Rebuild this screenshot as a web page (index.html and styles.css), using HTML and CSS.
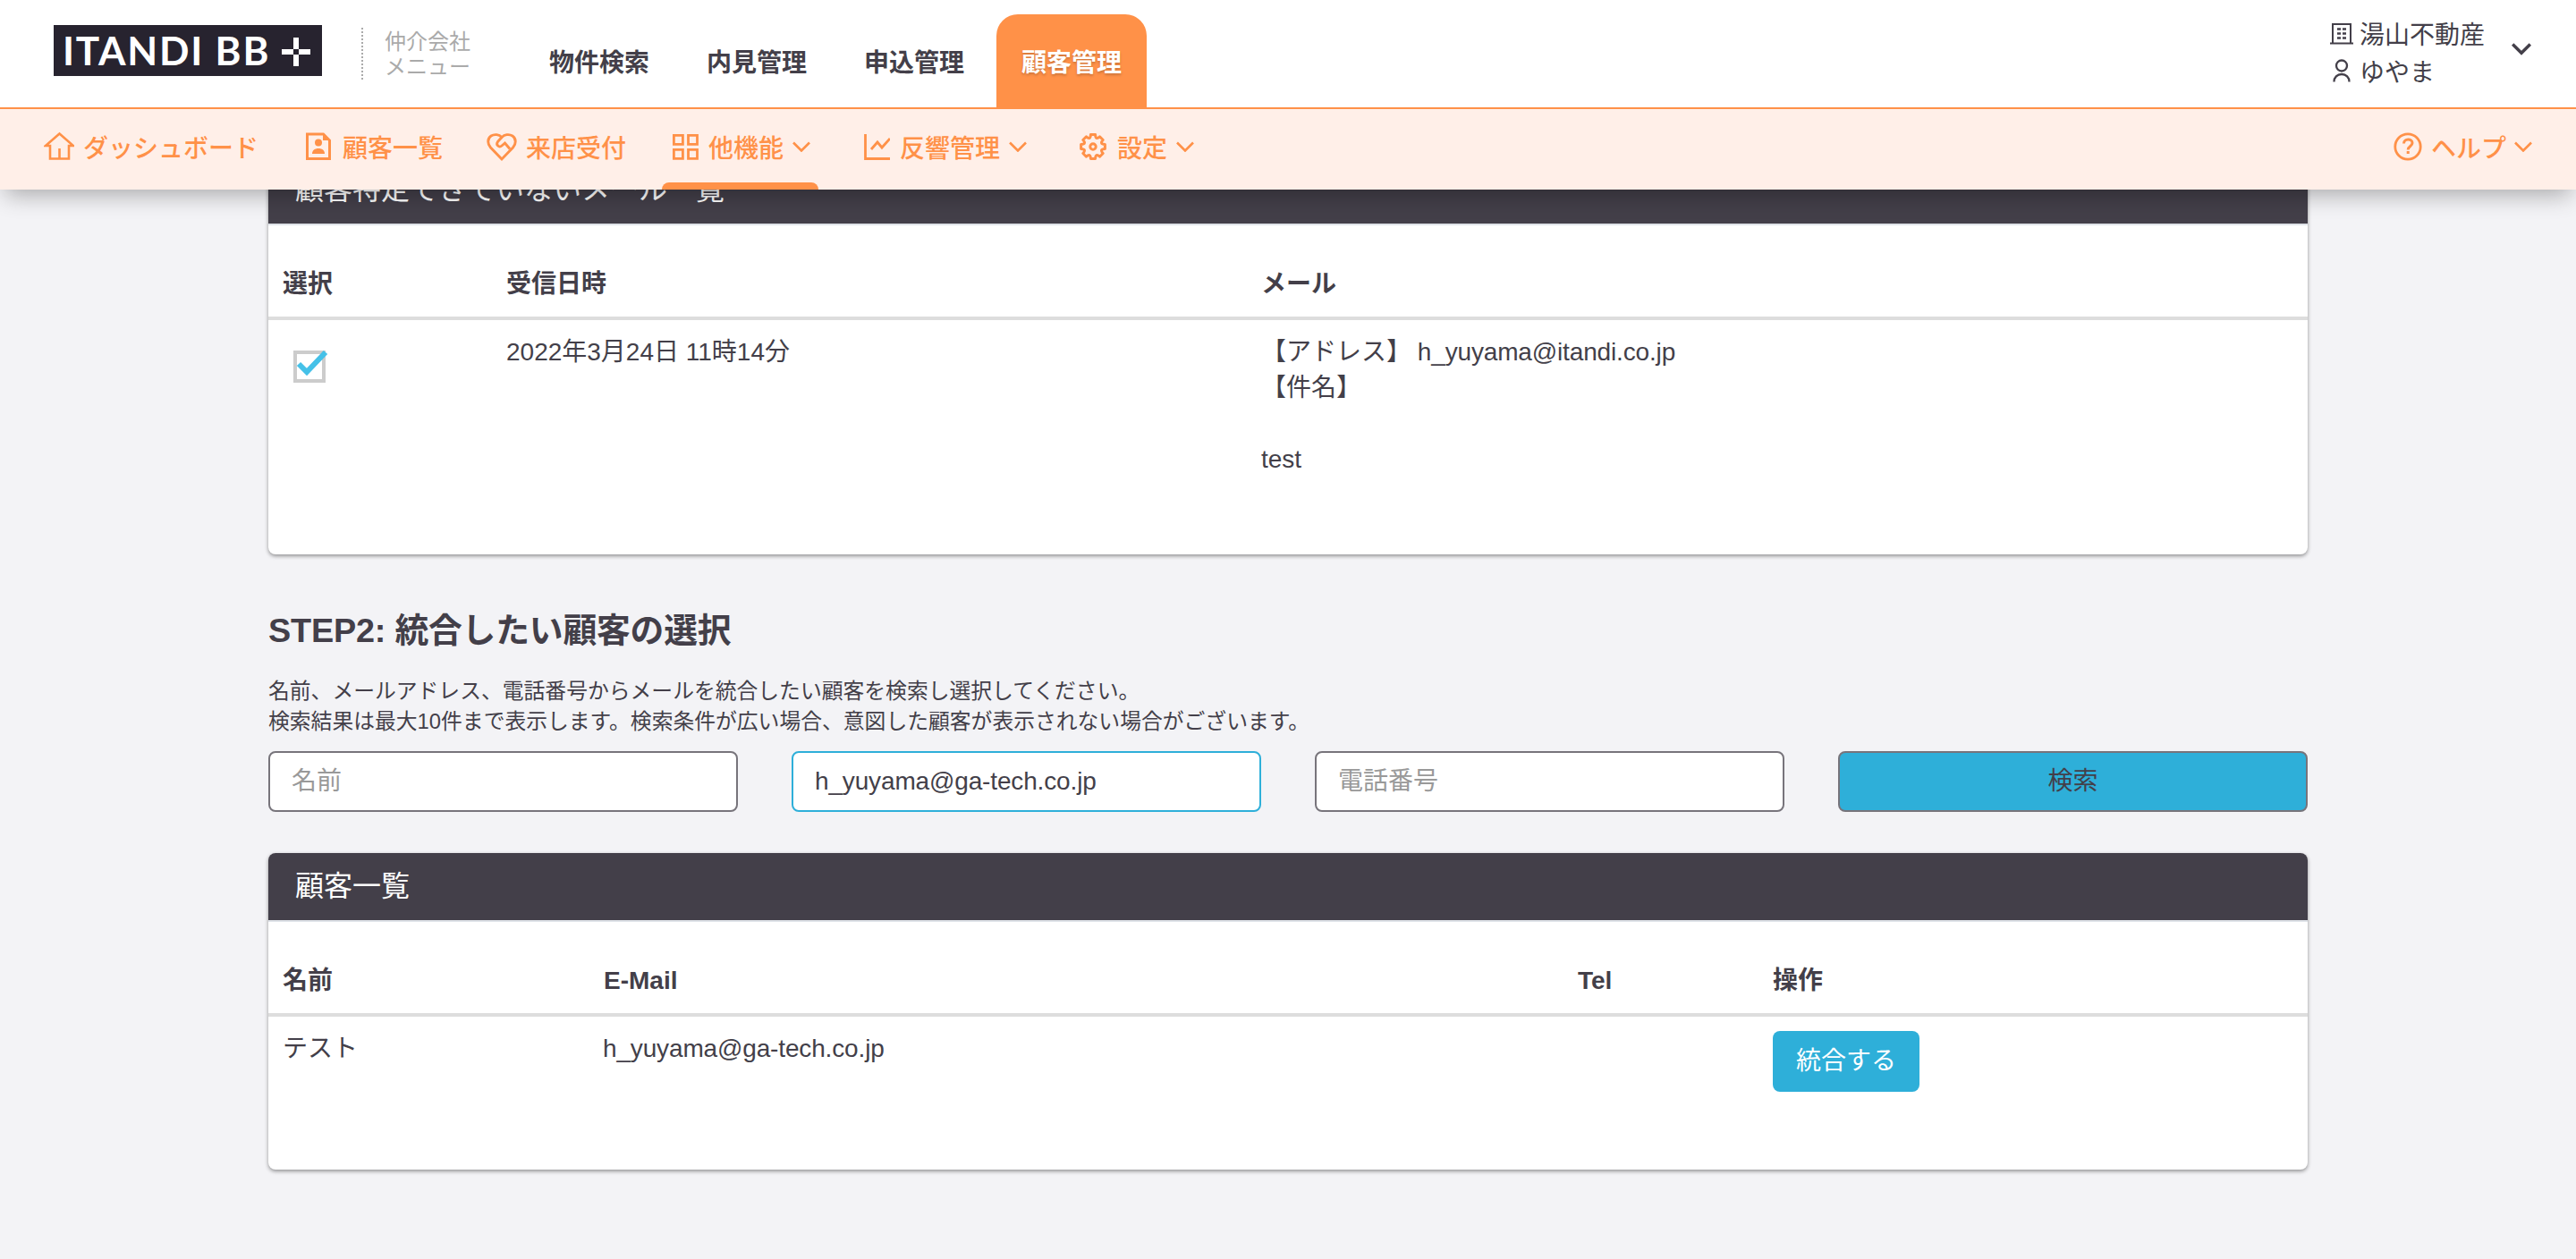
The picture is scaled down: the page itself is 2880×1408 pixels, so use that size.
FILE: index.html
```html
<!DOCTYPE html>
<html lang="ja">
	<head>
		<meta charset="UTF-8">
		<title>ITANDI BB +</title>
		<link rel="stylesheet" href="styles.css">
	</head>
	<body>
		<header class="header">
			<div class="top">
				<div class="logo">
					<span class="logo_text">ITANDI BB</span>
					<svg class="logo_plus" width="34" height="34" viewBox="0 0 34 34"><path d="M14 1h6v13h-6zM14 20h6v13h-6zM1 14h13v6H1zM20 14h13v6H20z" fill="#fff"/></svg>
				</div>
				<p class="menu_name">仲介会社<br>メニュー</p>
				<ul class="nav">
					<li><a href="#">物件検索</a></li>
					<li><a href="#">内見管理</a></li>
					<li><a href="#">申込管理</a></li>
					<li class="on"><a href="#">顧客管理</a></li>
				</ul>
				<div class="account">
					<div class="account_info">
						<p><svg width="26" height="26" viewBox="0 0 26 26"><path d="M3 24V3h20v21M0 24.500h26" fill="none" stroke="currentColor" stroke-width="2"/><path d="M8 8.500h4M14 8.500h4M8 13.500h4M14 13.500h4M8 18.500h4M14 18.500h4" stroke="currentColor" stroke-width="2.500"/></svg>湯山不動産</p>
						<p><svg width="26" height="26" viewBox="0 0 26 26"><circle cx="13" cy="7.500" r="6" fill="none" stroke="currentColor" stroke-width="2.300"/><path d="M4.500 25.500c0-5 3.500-8.500 8.500-8.500s8.500 3.500 8.500 8.500" fill="none" stroke="currentColor" stroke-width="2.300"/></svg>ゆやま</p>
					</div>
					<svg class="account_arrow" width="22" height="14" viewBox="0 0 22 14"><path d="M1.200 1.500l9.800 9.800 9.800-9.800" fill="none" stroke="currentColor" stroke-width="3.400"/></svg>
				</div>
			</div>
			<ul class="sub">
				<li class="s1"><svg width="34" height="34" viewBox="0 0 34 34"><path d="M2 16h5v14.500h21V16h5L17.500 2.500z M17.500 30.500V19" fill="none" stroke="currentColor" stroke-width="2.600"/></svg>ダッシュボード</li>
				<li class="s2"><svg width="28" height="34" viewBox="0 0 28 34"><path d="M1.500 3h18l7 7v20.500h-25z" fill="none" stroke="currentColor" stroke-width="3"/><path d="M19 2l8 8h-8z" fill="currentColor"/><circle cx="14" cy="12.500" r="4" fill="currentColor"/><path d="M7 25c0-4 3-6 7-6s7 2 7 6z" fill="currentColor"/></svg>顧客一覧</li>
				<li class="s3"><svg width="34" height="34" viewBox="0 0 34 34"><path d="M17 31L4.500 18C1 14 .500 8 5 5c4-2.500 9-1.500 12 1.500 3-3 8-4 12-1.500 4.500 3 4 9 .5 13z" fill="none" stroke="currentColor" stroke-width="2.900"/><path d="M17 6.500l-4.500 5c-2.500 3.500 1.500 7 4.500 4.500l3.500-3 5.500 6.500" fill="none" stroke="currentColor" stroke-width="2.900"/></svg>来店受付</li>
				<li class="s4 on"><svg width="29" height="34" viewBox="0 0 29 34"><path d="M1.400 4.400h10v10h-10zM17.500 4.400h10v10h-10zM1.400 20.400h10v10h-10zM17.500 20.400h10v10h-10z" fill="none" stroke="currentColor" stroke-width="2.800"/></svg>他機能<svg class="arrow" width="20" height="12" viewBox="0 0 20 12"><path d="M1 1.500l9 9 9-9" fill="none" stroke="currentColor" stroke-width="2.600"/></svg></li>
				<li class="s5"><svg width="29" height="34" viewBox="0 0 29 34"><path d="M1.500 3v27.500H29" fill="none" stroke="currentColor" stroke-width="2.800"/><path d="M8 20l7-8 5 6 9-10" fill="none" stroke="currentColor" stroke-width="2.800"/></svg>反響管理<svg class="arrow" width="20" height="12" viewBox="0 0 20 12"><path d="M1 1.500l9 9 9-9" fill="none" stroke="currentColor" stroke-width="2.600"/></svg></li>
				<li class="s6"><svg width="32" height="34" viewBox="0 0 32 34"><g transform="translate(16 17)" fill="none" stroke="currentColor" stroke-width="3" stroke-linejoin="round"><path d="M-2.600-13.400H2.600Q2.900-6.900 7.500-11.200L11.200-7.500Q6.900-2.900 13.400-2.600V2.600Q6.900 2.900 11.200 7.500L7.500 11.200Q2.900 6.900 2.600 13.400H-2.600Q-2.900 6.900-7.500 11.200L-11.200 7.500Q-6.900 2.900-13.400 2.600V-2.600Q-6.900-2.900-11.200-7.500L-7.500-11.200Q-2.900-6.900-2.600-13.400z"/><circle r="3.200"/></g></svg>設定<svg class="arrow" width="20" height="12" viewBox="0 0 20 12"><path d="M1 1.500l9 9 9-9" fill="none" stroke="currentColor" stroke-width="2.600"/></svg></li>
				<li class="help"><svg width="32" height="34" viewBox="0 0 32 34"><circle cx="16" cy="17" r="14.200" fill="none" stroke="currentColor" stroke-width="2.800"/><path d="M11.500 13.500c0-6 9.500-6 9.500-.5 0 3.500-4.800 3.500-4.800 7.500M16.200 22v3" fill="none" stroke="currentColor" stroke-width="3"/></svg>ヘルプ<svg class="arrow" width="20" height="12" viewBox="0 0 20 12"><path d="M1 1.500l9 9 9-9" fill="none" stroke="currentColor" stroke-width="2.600"/></svg></li>
			</ul>
		</header>
		<div class="main">
			<div class="card mails">
				<h2>顧客特定できていないメール一覧</h2>
				<table>
					<tr><th class="m1">選択</th><th class="m2">受信日時</th><th>メール</th></tr>
					<tr>
						<td><span class="check"><svg width="36" height="30" viewBox="0 0 36 30"><path d="M3 16l9 9L33 3" fill="none" stroke="#45c1e8" stroke-width="6"/></svg></span></td>
						<td>2022年3月24日 11時14分</td>
						<td>【アドレス】 <span class="mail">h_yuyama@itandi.co.jp</span><br>【件名】<br><br>test</td>
					</tr>
				</table>
			</div>
			<h1>STEP2: 統合したい顧客の選択</h1>
			<p class="note">名前、メールアドレス、電話番号からメールを統合したい顧客を検索し選択してください。<br>検索結果は最大10件まで表示します。検索条件が広い場合、意図した顧客が表示されない場合がございます。</p>
			<form class="search">
				<input type="text" placeholder="名前">
				<input type="text" class="focus" value="h_yuyama@ga-tech.co.jp">
				<input type="text" placeholder="電話番号">
				<button type="button">検索</button>
			</form>
			<div class="card customers">
				<h2>顧客一覧</h2>
				<table>
					<tr><th class="c1">名前</th><th class="c2">E-Mail</th><th class="c3">Tel</th><th>操作</th></tr>
					<tr>
						<td>テスト</td>
						<td><span class="mail">h_yuyama@ga-tech.co.jp</span></td>
						<td></td>
						<td><a class="btn" href="#">統合する</a></td>
					</tr>
				</table>
			</div>
		</div>
	</body>
</html>
```
FILE: styles.css
```css
*{margin:0;padding:0;box-sizing:border-box;}
html,body{
	height:100%;
	overflow:hidden;
}
body{
	font:28px/40px "Liberation Sans","Noto Sans CJK JP",sans-serif;
	color:#433f49;
	background:#f3f3f6;
}
ul{list-style:none;}
a{text-decoration:none;color:inherit;}
svg{flex:none;}
input,button{outline:none;font:inherit;color:inherit;}

/* header */
.header{
	position:relative;
	z-index:10;
	height:212px;
	background:#fff;
	font-family:"Noto Sans CJK JP",sans-serif;
	box-shadow:0 12px 24px -6px rgba(0,0,0,.3);
}
.top{
	display:flex;
	height:122px;
	padding-left:60px;
	border-bottom:2px solid #ff9148;
}
.logo{
	display:flex;
	align-items:center;
	width:300px;
	height:57px;
	margin-top:28px;
	padding-left:10px;
	background:#27232f;
	color:#fff;
}
.logo_text{
	width:244px;
	font:bold 44px/57px Lato,sans-serif;
	letter-spacing:1.800px;
	white-space:nowrap;
}
.logo_plus{margin-top:2px;}
.menu_name{
	height:58px;
	margin:31px 0 0 44px;
	padding-left:24px;
	border-left:2px dotted #aaa;
	color:#aaa;
	font-size:24px;
	line-height:28px;
}
.nav{
	display:flex;
	gap:8px;
	margin:16px 0 0 60px;
}
.nav li{
	width:168px;
	height:104px;
	border-radius:24px 24px 0 0;
	text-align:center;
	font-weight:bold;
	line-height:105px;
}
.nav .on{
	background:#ff9148;
	color:#fff;
	text-shadow:0 2px 3px rgba(0,0,0,.2);
}
.account{
	display:flex;
	margin:16px 50px 0 auto;
	gap:30px;
}
.account_info p{
	display:flex;
	align-items:center;
	gap:7px;
	height:42px;
}
.account_arrow{margin-top:32px;}
.sub{
	display:flex;
	height:90px;
	padding:0 49px;
	background:#ffefe8;
	color:#ff9148;
	font-weight:500;
}
.sub li{
	display:flex;
	align-items:center;
	gap:10px;
	height:84px;
}
.sub .s2{margin-left:53px;gap:13px;}
.sub .s3{margin-left:49px;}
.sub .s4{margin-left:40px;}
.sub .on{
	position:relative;
	padding:0 9px 0 12px;
	gap:11px;
}
/* current menu marker */
.sub .on::after{
	content:"";
	position:absolute;
	left:0;
	bottom:-6px;
	width:100%;
	height:8px;
	border-radius:8px 8px 0 0;
	background:#ff9148;
}
.sub .s5{margin-left:51px;gap:11px;}
.sub .s6{margin-left:58px;gap:11px;}
.sub .help{margin-left:auto;}
.sub .arrow{margin-left:-1px;}

/* content */
.main{
	width:2280px;
	margin:-37px auto 0;
}
.card{
	border-radius:8px;
	background:#fff;
	box-shadow:0 2px 4px rgba(0,0,0,.4);
}
.mails{height:445px;}
.customers{height:354px;}
.card h2{
	height:77px;
	padding-left:30px;
	border-bottom:2px solid #dfe3e8;
	border-radius:8px 8px 0 0;
	background:#433f49;
	background-clip:padding-box;
	color:#fff;
	font-size:32px;
	font-weight:normal;
	line-height:75px;
}
.card table{
	width:100%;
	table-layout:fixed;
	border-collapse:separate;
	border-spacing:0;
}
.card th{
	height:106px;
	padding:29px 16px 0;
	border-bottom:4px solid #ddd;
	text-align:left;
}
.card td{
	padding:16px 16px 0;
	vertical-align:top;
}
.m1{width:250px;}
.m2{width:844px;}
.c1{width:359px;}
.c2{width:1089px;}
.c3{width:218px;}
.mail,.focus{letter-spacing:-.15px;}
.mail{margin-left:-1px;}
.check{
	display:block;
	width:36px;
	height:36px;
	margin:18px 0 0 12px;
	border:4px solid #ccc;
}
.check svg{
	display:block;
	margin:-5px 0 0 -1px;
	overflow:visible;
}
.btn{
	display:block;
	width:164px;
	height:68px;
	border-radius:8px;
	background:#2eafd9;
	color:#fff;
	text-align:center;
	line-height:67px;
}
h1{
	margin-top:60px;
	font-size:37.800px;
	line-height:50px;
	letter-spacing:-.2px;
}
.note{
	margin-top:26px;
	font-size:23.800px;
	line-height:34px;
}
.search{
	display:grid;
	grid-template-columns:repeat(4,1fr);
	gap:60px;
	margin:16px 0 46px;
}
.search input,.search button{
	width:100%;
	height:68px;
	padding:0 24px;
	border:2px solid #77747b;
	border-radius:8px;
	background:#fff;
}
.search .focus{border-color:#2eafd9;}
.search button{background:#2eafd9;}
::placeholder{color:#999;}
```
